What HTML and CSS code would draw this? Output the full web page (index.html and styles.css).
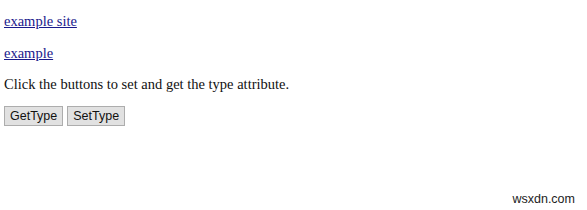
FILE: index.html
```html
<!DOCTYPE html>
<html lang="en">
<head>
  <meta charset="UTF-8">
  <title>Type attribute</title>
  <link rel="stylesheet" href="styles.css">
</head>
<body>
  <p><a href="#" id="siteLink">example site</a></p>
  <p><a href="#" id="exampleLink">example</a></p>
  <p class="note">Click the buttons to set and get the type attribute.</p>
  <div class="buttons">
    <button class="btn">GetType</button>
    <button class="btn">SetType</button>
  </div>

  <!-- Watermark -->
  <div class="watermark">wsxdn.com</div>
</body>
</html>
```

FILE: styles.css
```css
body {
  font-family: 'Liberation Serif', 'Times New Roman', serif;
  font-size: 14.5px;
  margin: 0;
  padding: 0 4px;
  color: #111;
  background: #fff;
}
p {
  margin: 13px 0 14.5px;
}
p.note {
  margin-bottom: 13px;
}
a {
  color: #1a1a8c;
}
.buttons {
  display: flex;
  gap: 4px;
}
.btn {
  font-family: 'Liberation Sans', Arial, sans-serif;
  font-size: 12.5px;
  padding: 1px 5px;
  height: 20px;
  background: #e1e1e1;
  border: 1px solid #adadad;
  border-radius: 0;
  color: #111;
}
.watermark {
  position: absolute;
  right: 12px;
  bottom: 4px;
  font-family: 'Liberation Sans', Arial, sans-serif;
  font-size: 12.5px;
  color: #222;
}
```
